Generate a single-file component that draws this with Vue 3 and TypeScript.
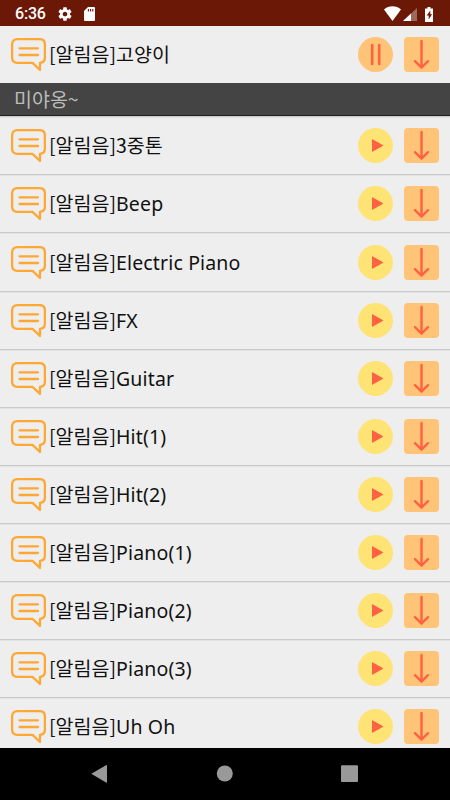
<script setup lang="ts">
interface Sound {
  name: string
  hangul?: boolean
  playing?: boolean
}

const current: Sound = { name: '고양이', hangul: true, playing: true }
const sounds: Sound[] = [
  { name: '3중톤', hangul: true },
  { name: 'Beep' },
  { name: 'Electric Piano' },
  { name: 'FX' },
  { name: 'Guitar' },
  { name: 'Hit(1)' },
  { name: 'Hit(2)' },
  { name: 'Piano(1)' },
  { name: 'Piano(2)' },
  { name: 'Piano(3)' },
  { name: 'Uh Oh' },
]
const groups: { id: string; items: Sound[]; section?: string }[] = [
  { id: 'current', items: [current], section: '미야옹~' },
  { id: 'list', items: sounds },
]
</script>

<template>
  <div class="screen">
    <header class="status">
      <span class="time">6:36</span>
      <svg class="gear" width="16" height="16" viewBox="0 0 24 24">
        <path fill="#fff" d="M19.43 12.98c.04-.32.07-.64.07-.98s-.03-.66-.07-.98l2.11-1.65c.19-.15.24-.42.12-.64l-2-3.46c-.12-.22-.39-.3-.61-.22l-2.49 1c-.52-.4-1.08-.73-1.69-.98l-.38-2.65C14.46 2.18 14.25 2 14 2h-4c-.25 0-.46.18-.49.42l-.38 2.65c-.61.25-1.17.59-1.69.98l-2.49-1c-.23-.09-.49 0-.61.22l-2 3.46c-.13.22-.07.49.12.64l2.11 1.65c-.04.32-.07.65-.07.98s.03.66.07.98l-2.11 1.65c-.19.15-.24.42-.12.64l2 3.46c.12.22.39.3.61.22l2.49-1c.52.4 1.08.73 1.69.98l.38 2.65c.03.24.24.42.49.42h4c.25 0 .46-.18.49-.42l.38-2.65c.61-.25 1.17-.59 1.69-.98l2.49 1c.23.09.49 0 .61-.22l2-3.46c.12-.22.07-.49-.12-.64l-2.11-1.65zM12 15.5c-1.93 0-3.5-1.57-3.5-3.5s1.57-3.5 3.5-3.5 3.5 1.57 3.5 3.5-1.57 3.5-3.5 3.5z" />
      </svg>
      <svg class="card" width="11" height="14" viewBox="0 0 11 14">
        <path fill="#fff" d="M4 0h6a1 1 0 0 1 1 1v12a1 1 0 0 1-1 1H1a1 1 0 0 1-1-1V4z" />
        <path stroke="#6b1806" stroke-width="1.1" d="M4.4 2v2.5M6.6 2v2.5M8.8 2v2.5" />
      </svg>
      <span class="spacer" />
      <svg class="signals" width="51" height="16" viewBox="0 0 51 16">
        <path fill="#fff" d="M0 3.5C4.8-.9 12.2-.9 17 3.5L8.500 15z" />
        <path fill="#fff" fill-opacity=".35" d="M33 2v13H19z" />
        <path fill="#fff" d="M27 7.500v7.500H19z" />
        <path fill="#fff" d="M43.500 1h3v1.500h2.500v13.500h-8V2.500h2.500z" />
        <path fill="#6b1806" d="M46.300 4.500l-3.600 5h2v4l3.400-5.300h-1.800z" />
      </svg>
    </header>

    <main class="content">
      <template v-for="group in groups" :key="group.id">
        <div v-for="item in group.items" :key="item.name" class="row" :class="{ first: group.section }">
          <svg class="icon" viewBox="0.5 0.5 35 35" fill="none" stroke="#ffa733" stroke-width="2.300" stroke-linejoin="round" stroke-linecap="round">
            <path d="M7 2.600H29Q34.400 2.600 34.400 8V21Q34.400 26 29.500 26.400V33.500L22 26.400H7Q1.600 26.400 1.600 21V8Q1.600 2.600 7 2.600Z" />
            <path d="M9 11.800H27.500M9 18.500H27.500" />
          </svg>
          <span class="title"><span class="tag">[알림음]</span><span :class="item.hangul ? 'ko' : 'latin'">{{ item.name }}</span></span>
          <svg class="icon play" viewBox="0.5 0.5 35 35">
            <template v-if="item.playing">
              <circle cx="18" cy="18" r="17.500" fill="#ffc477" />
              <path d="M14.700 8.500V27.500M21.700 8.500V27.500" stroke="#ff6242" stroke-width="2.600" stroke-linecap="round" />
            </template>
            <template v-else>
              <circle cx="18" cy="18" r="17.500" fill="#ffe375" />
              <path d="M14.500 11.500L26 18L14.500 24.500Z" fill="#ff6242" />
            </template>
          </svg>
          <svg class="icon" viewBox="0.5 0.5 35 35">
            <rect x=".5" y=".5" width="35" height="35" rx="4" fill="#ffc477" />
            <path d="M18 4.500V31M11.500 24.700L18 31L24.500 24.700" fill="none" stroke="#ff6242" stroke-width="2.400" stroke-linecap="round" />
          </svg>
        </div>
        <div v-if="group.section" class="section">{{ group.section }}</div>
      </template>
    </main>

    <nav class="navbar">
      <svg width="450" height="52" viewBox="0 0 450 52" fill="#999">
        <path d="M91.300 25.700L106 17.200Q107 16.700 107 17.700V34Q107 35 106 34.500Z" />
        <circle cx="224.800" cy="25.500" r="8" />
        <rect x="341" y="17.200" width="17" height="16.800" rx="1" />
      </svg>
    </nav>
  </div>
</template>

<style>
body {
  margin: 0;
}
</style>

<style scoped>
.screen {
  display: flex;
  flex-direction: column;
  width: 450px;
  height: 800px;
  overflow: hidden;
  background: #eee;
  font-family: "Noto Sans", "Noto Sans CJK KR", sans-serif;
}
.status {
  display: flex;
  flex: none;
  align-items: center;
  box-sizing: border-box;
  height: 26px;
  padding: 1px 15px 0;
  background: #6b1806;
}
.time {
  width: 42px;
  color: #fff;
  font: 500 16px/25px Roboto, sans-serif;
  letter-spacing: -0.2px;
}
.gear {
  margin-right: 11px;
}
.spacer {
  flex: 1;
}
.content {
  flex: 1;
  min-height: 0;
  overflow: hidden;
}
.row {
  display: flex;
  align-items: center;
  box-sizing: border-box;
  height: 58.100px;
  padding: 0 11px;
  border-bottom: 1px solid #c9c9c9;
  box-shadow: inset 0 1px #e2e2e2;
}
.row.first {
  height: 57px;
  border-bottom: 0;
  box-shadow: none;
}
.icon {
  flex: none;
  width: 35px;
  height: 35px;
}
.title {
  flex: 1;
  padding-left: 3px;
  color: #111;
  font-size: 20px;
  line-height: 36px;
  white-space: pre;
}
.tag,
.ko {
  font-family: "Noto Sans CJK KR", sans-serif;
  font-size: 19.500px;
}
.latin {
  font-size: 19.500px;
  letter-spacing: 0.150px;
}
.play {
  margin-right: 11px;
}
.section {
  box-sizing: border-box;
  height: 33px;
  margin-bottom: 1.300px;
  padding-left: 14px;
  border-bottom: 1px solid #222;
  background: #444;
  box-shadow: 0 1px #ccc;
  color: #bbb;
  font: 19.500px/31px "Noto Sans CJK KR", sans-serif;
}
.navbar {
  flex: none;
  height: 52px;
  background: #000;
}
.navbar svg {
  display: block;
}
</style>
